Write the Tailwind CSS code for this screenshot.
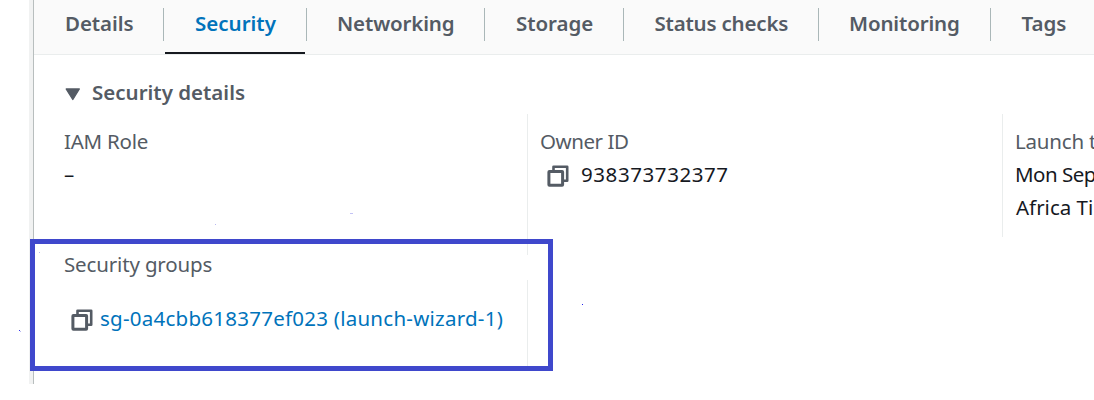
<!DOCTYPE html>
<html lang="en">
<head>
<meta charset="utf-8">
<title>Instance security</title>
<script src="https://cdn.jsdelivr.net/npm/@tailwindcss/browser@4"></script>
</head>
<body class="relative h-[400px] w-[1094px] overflow-hidden bg-white font-['Noto_Sans',sans-serif] text-[20.5px] leading-[33px] text-[#16191f]">
<svg class="hidden">
  <symbol id="copy" viewBox="0 0 22 22">
    <path d="M6.5 5V1.8H20.2V15.7H17" fill="none" stroke="#545b64" stroke-width="2.6" stroke-linejoin="round"/>
    <rect x="1.9" y="6.5" width="13.7" height="13.8" rx="0.5" fill="#fff" stroke="#545b64" stroke-width="3"/>
  </symbol>
</svg>
<div class="ml-[29px] flex h-[384px]">
  <div class="w-[5px] shrink-0 border-r border-[#b8bebe] bg-[#f1f2f2]"></div>
  <main class="min-w-0 flex-1 overflow-hidden">
    <nav class="flex h-[55px] border-b border-[#eaeded] bg-[#fafafa] font-semibold whitespace-nowrap text-[#545b64]">
      <div class="w-[129px] shrink-0 pt-[7px] pl-[31px] tracking-[-0.07px]">Details</div>
      <div class="mt-2 h-[33px] w-px shrink-0 bg-[#aab7b8]"></div>
      <div class="mx-px w-[140px] shrink-0 border-b-2 border-[#16191f] pt-[7px] pl-[30px] text-[#0073bb]">Security</div>
      <div class="mt-2 h-[33px] w-px shrink-0 bg-[#aab7b8]"></div>
      <div class="w-[177px] shrink-0 pt-[7px] pl-[30px] tracking-[-0.14px]">Networking</div>
      <div class="mt-2 h-[33px] w-px shrink-0 bg-[#aab7b8]"></div>
      <div class="w-[138px] shrink-0 pt-[7px] pl-[31px] tracking-[-0.05px]">Storage</div>
      <div class="mt-2 h-[33px] w-px shrink-0 bg-[#aab7b8]"></div>
      <div class="w-[194px] shrink-0 pt-[7px] pl-[30.5px] tracking-[-0.2px]">Status checks</div>
      <div class="mt-2 h-[33px] w-px shrink-0 bg-[#aab7b8]"></div>
      <div class="w-[171px] shrink-0 pt-[7px] pl-[30px] tracking-[-0.15px]">Monitoring</div>
      <div class="mt-2 h-[33px] w-px shrink-0 bg-[#aab7b8]"></div>
      <div class="pt-[7px] pl-[30.5px]">Tags</div>
    </nav>
    <h2 class="flex h-[59px] pt-[21px] pl-[31px] font-semibold text-[#545b64]">
      <svg class="mt-3 mr-[11px] h-[13px] w-4" viewBox="0 0 16 13"><path d="M1.2 1H14.3L7.8 11.5Z" fill="#545b64" stroke="#545b64" stroke-width="1.4" stroke-linejoin="round"/></svg>
      <span>Security details</span>
    </h2>
    <div class="flex whitespace-nowrap">
      <section class="h-[141px] w-[494px] shrink-0 border-r border-[#eaeded] pt-[11px] pl-[30px]">
        <div class="tracking-[-0.25px] text-[#545b64]">IAM Role</div>
        <div>–</div>
      </section>
      <section class="h-[123px] w-[475px] shrink-0 border-r border-[#eaeded] pt-[11px] pl-3">
        <div class="tracking-[-0.44px] text-[#545b64]">Owner ID</div>
        <div class="flex items-start tracking-[0.58px]"><svg class="mt-[7px] mr-3 ml-[7px] size-[22px]"><use href="#copy"/></svg>938373732377</div>
      </section>
      <section class="pt-[11px] pl-3">
        <div class="tracking-[-0.2px] text-[#545b64]">Launch time</div>
        <div class="tracking-[-0.5px]">Mon Sep</div>
        <div class="pl-[1px]">Africa Time</div>
      </section>
    </div>
    <div class="-mt-[7px] w-[494px] pl-[30px] whitespace-nowrap">
      <div class="h-8 tracking-[-0.15px] text-[#545b64]">Security groups</div>
      <div class="flex h-[86px] items-start border-r border-[#eaeded] pt-[22px] tracking-[0.25px] text-[#0073bb]"><svg class="mt-[7px] mr-[7px] ml-[7px] size-[22px]"><use href="#copy"/></svg>sg-0a4cbb618377ef023 (launch-wizard-1)</div>
    </div>
  </main>
</div>
<!-- Highlight annotation and stray pen marks -->
<div class="absolute top-[239px] left-[30px] h-[132px] w-[523px] border-[5px] border-[#3f48cc]"></div>
<div class="absolute top-[213px] left-[350px] h-px w-[3px] bg-[#c3c3f5]"></div>
<div class="absolute top-[224px] left-[215px] size-px bg-[#b9b9f0]"></div>
<div class="absolute top-[252px] left-[39px] size-px bg-[#b9b9f0]"></div>
<div class="absolute top-[330px] left-[19px] size-px bg-[#3333ee]"></div>
<div class="absolute top-[331px] left-[20px] size-px bg-[#b9b9f0]"></div>
<div class="absolute top-[304px] left-[582px] size-px bg-[#2222ee]"></div>
</body>
</html>
